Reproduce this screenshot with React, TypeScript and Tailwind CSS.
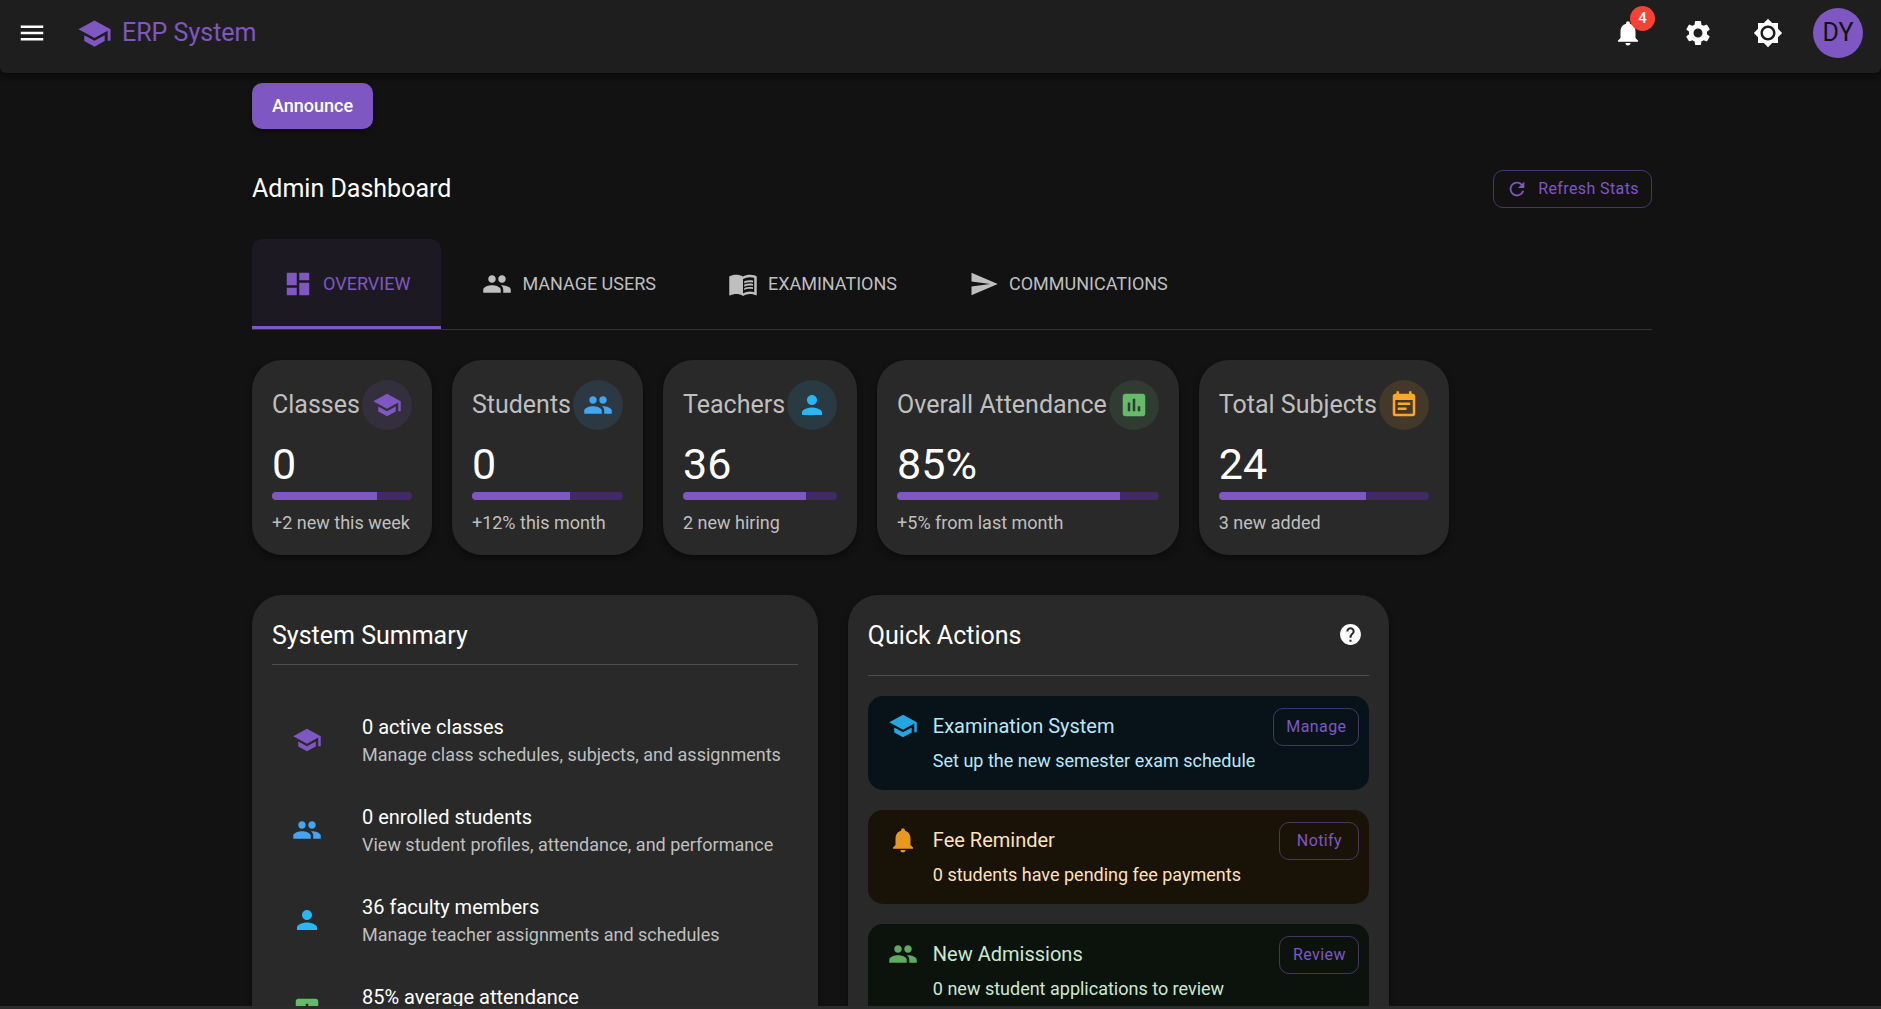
import { useState } from 'react'
import type { IconType } from 'react-icons'
import {
  MdAssessment,
  MdBrightness7,
  MdDashboard,
  MdEventNote,
  MdHelp,
  MdMenu,
  MdMenuBook,
  MdNotifications,
  MdPeople,
  MdPerson,
  MdRefresh,
  MdSchool,
  MdSend,
  MdSettings,
} from 'react-icons/md'

const tabs: { label: string; icon: IconType }[] = [
  { label: 'Overview', icon: MdDashboard },
  { label: 'Manage Users', icon: MdPeople },
  { label: 'Examinations', icon: MdMenuBook },
  { label: 'Communications', icon: MdSend },
]

const stats = [
  { title: 'Classes', value: '0', note: '+2 new this week', progress: 75, icon: MdSchool, tint: 'bg-[#7e57c2]/12 text-[#7e57c2]' },
  { title: 'Students', value: '0', note: '+12% this month', progress: 65, icon: MdPeople, tint: 'bg-[#42a5f5]/12 text-[#42a5f5]' },
  { title: 'Teachers', value: '36', note: '2 new hiring', progress: 80, icon: MdPerson, tint: 'bg-[#29b6f6]/12 text-[#29b6f6]' },
  { title: 'Overall Attendance', value: '85%', note: '+5% from last month', progress: 85, icon: MdAssessment, tint: 'bg-[#66bb6a]/12 text-[#66bb6a]' },
  { title: 'Total Subjects', value: '24', note: '3 new added', progress: 70, icon: MdEventNote, tint: 'bg-[#ffa726]/12 text-[#ffa726]' },
]

const summary = [
  { title: '0 active classes', text: 'Manage class schedules, subjects, and assignments', icon: MdSchool, color: 'text-[#7e57c2]' },
  { title: '0 enrolled students', text: 'View student profiles, attendance, and performance', icon: MdPeople, color: 'text-[#42a5f5]' },
  { title: '36 faculty members', text: 'Manage teacher assignments and schedules', icon: MdPerson, color: 'text-[#29b6f6]' },
  { title: '85% average attendance', text: '', icon: MdAssessment, color: 'text-[#66bb6a]' },
]

const actions = [
  { title: 'Examination System', text: 'Set up the new semester exam schedule', button: 'Manage', icon: MdSchool, box: 'bg-[#071318] text-[#b8e7fb]', color: 'text-[#29b6f6]' },
  { title: 'Fee Reminder', text: '0 students have pending fee payments', button: 'Notify', icon: MdNotifications, box: 'bg-[#191207] text-[#ffe2b7]', color: 'text-[#ffa726]' },
  { title: 'New Admissions', text: '0 new student applications to review', button: 'Review', icon: MdPeople, box: 'bg-[#0c130d] text-[#cce8cd]', color: 'text-[#66bb6a]' },
]

const outlined = 'h-[38px] rounded-[10px] border border-[#7e57c2]/50 text-base tracking-wide text-[#7e57c2]'
const panel = 'rounded-[30px] bg-[#292929] p-5 shadow-[0_3px_6px_rgba(0,0,0,0.4)]'

function Header() {
  return (
    <header className="relative z-10 flex shrink-0 items-center rounded-b-md bg-[#1e1e1e] pt-2 pr-[18px] pb-[15px] pl-[17px] shadow-[0_3px_8px_rgba(0,0,0,0.5)]">
      <button aria-label="Open menu"><MdMenu size={30} /></button>
      <a href="#" className="ml-[30px] flex items-center gap-[10px] text-[25px] leading-[50px] text-[#7e57c2]">
        <MdSchool size={35} />
        ERP System
      </a>
      <div className="ml-auto flex items-center gap-5">
        <button aria-label="Notifications" className="relative flex size-[50px] items-center justify-center">
          <MdNotifications size={30} />
          <span className="absolute -top-0.5 -right-0.5 flex size-[25px] items-center justify-center rounded-full bg-[#f44336] text-[15px] font-medium">4</span>
        </button>
        <button aria-label="Settings" className="flex size-[50px] items-center justify-center"><MdSettings size={30} /></button>
        <button aria-label="Toggle theme" className="flex size-[50px] items-center justify-center"><MdBrightness7 size={30} /></button>
        <button aria-label="Account" className="size-[50px] rounded-full bg-[#7e57c2] text-[25px] text-[#121212]">DY</button>
      </div>
    </header>
  )
}

function StatCard({ stat }: { stat: (typeof stats)[number] }) {
  const Icon = stat.icon
  return (
    <div className={panel}>
      <div className="flex items-center justify-between gap-0.5">
        <h3 className="text-[25px] whitespace-nowrap text-[#bfbfbf]">{stat.title}</h3>
        <div className={`flex size-[50px] shrink-0 items-center justify-center rounded-full ${stat.tint}`}>
          <Icon size={30} />
        </div>
      </div>
      <div className="mt-2 text-[43px] leading-[52px]">{stat.value}</div>
      <div role="progressbar" aria-label={stat.title} aria-valuenow={stat.progress} className="mt-0.5 h-2 overflow-hidden rounded-full bg-[#412a65]">
        <div className="h-full bg-[#7e57c2]" style={{ width: `${stat.progress}%` }} />
      </div>
      <p className="mt-[11px] text-lg leading-6 whitespace-nowrap text-[#bfbfbf]">{stat.note}</p>
    </div>
  )
}

function SystemSummary() {
  return (
    <section className={panel}>
      <h2 className="border-b border-[#4d4d4d] pb-[7px] text-[25px] leading-[42px]">System Summary</h2>
      <ul className="mt-[30px]">
        {summary.map(({ title, text, icon: Icon, color }) => (
          <li key={title} className="flex items-center gap-10 py-[17px] pr-[17px] pl-5">
            <Icon size={30} className={`shrink-0 ${color}`} />
            <div>
              <div className="text-xl leading-[30px]">{title}</div>
              <div className="min-h-[26px] text-lg leading-[26px] text-[#bfbfbf]">{text}</div>
            </div>
          </li>
        ))}
      </ul>
    </section>
  )
}

function QuickActions() {
  return (
    <section className={panel}>
      <div className="mb-5 flex items-start justify-between border-b border-[#4d4d4d] pb-[18px]">
        <h2 className="text-[25px] leading-[42px]">Quick Actions</h2>
        <button aria-label="Help" className="flex size-[38px] items-center justify-center"><MdHelp size={25} /></button>
      </div>
      <div className="flex flex-col gap-5">
        {actions.map(({ title, text, button, icon: Icon, box, color }) => (
          <div key={title} className={`flex items-start rounded-[15px] pt-[15px] pr-[10px] pb-4 pl-5 ${box}`}>
            <Icon size={30} className={`shrink-0 opacity-90 ${color}`} />
            <div className="mr-[18px] ml-[15px]">
              <div className="text-xl leading-[30px]">{title}</div>
              <div className="mt-[7px] text-lg leading-[26px]">{text}</div>
            </div>
            <button className={`-mt-[3px] ml-auto min-w-20 px-3 ${outlined}`}>{button}</button>
          </div>
        ))}
      </div>
    </section>
  )
}

export default function App() {
  const [active, setActive] = useState('Overview')

  return (
    <div className="flex h-screen flex-col overflow-hidden bg-[#121212] font-[Roboto,sans-serif] text-white">
      <Header />
      <div className="min-h-0 flex-1 overflow-hidden pl-[23px]">
        <main className="mx-auto max-w-[1400px] pt-[10px]">
          <button className="h-[46px] rounded-[10px] bg-[#7e57c2] px-5 text-lg font-medium shadow-[0_2px_4px_rgba(0,0,0,0.5)]">Announce</button>

          <div className="mt-[41px] flex items-center justify-between">
            <h1 className="text-[25px] leading-[38px]">Admin Dashboard</h1>
            <button className={`flex items-center gap-[10px] px-3 ${outlined}`}>
              <MdRefresh size={22} />
              Refresh Stats
            </button>
          </div>

          {/* Tabs */}
          <div role="tablist" className="mt-[31px] flex gap-[10px] border-b border-[#333333]">
            {tabs.map(({ label, icon: Icon }) => (
              <button key={label} role="tab" aria-selected={active === label} onClick={() => setActive(label)}
                className={`flex h-[90px] items-center gap-[10px] rounded-t-[10px] px-[31px] text-lg uppercase ${active === label ? 'bg-[#1c1922] text-[#7e57c2] shadow-[inset_0_-3px_0_#7e57c2]' : 'text-[#bfbfbf]'}`}>
                <Icon size={30} />
                {label}
              </button>
            ))}
          </div>

          <div className="mt-[30px] flex flex-wrap gap-5">
            {stats.map(stat => <StatCard key={stat.title} stat={stat} />)}
          </div>

          <div className="mt-10 flex items-start gap-[30px]">
            <SystemSummary />
            <QuickActions />
          </div>
        </main>
      </div>
      <footer className="h-[3px] shrink-0 bg-[#2c2c2c]" />
    </div>
  )
}
